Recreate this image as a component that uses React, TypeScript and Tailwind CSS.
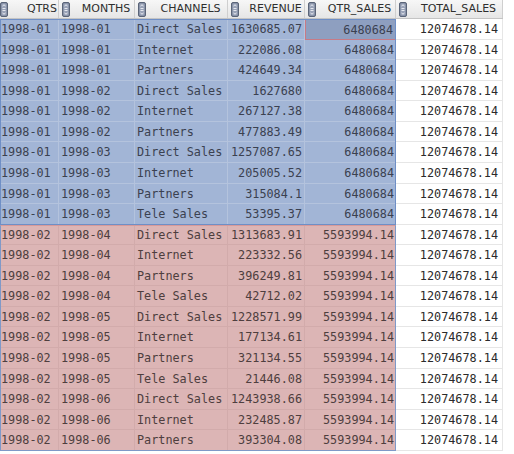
const columns = [
  { name: "QTRS", w: "w-[59px]" },
  { name: "MONTHS", w: "w-[76px]" },
  { name: "CHANNELS", w: "w-[93px]" },
  { name: "REVENUE", w: "w-[77px]" },
  { name: "QTR_SALES", w: "w-[91px]" },
  { name: "TOTAL_SALES", w: "w-[107px]" },
];

type Row = [string, string, string, string];

const rows: Row[] = [
  ["1998-01", "1998-01", "Direct Sales", "1630685.07"],
  ["1998-01", "1998-01", "Internet", "222086.08"],
  ["1998-01", "1998-01", "Partners", "424649.34"],
  ["1998-01", "1998-02", "Direct Sales", "1627680"],
  ["1998-01", "1998-02", "Internet", "267127.38"],
  ["1998-01", "1998-02", "Partners", "477883.49"],
  ["1998-01", "1998-03", "Direct Sales", "1257087.65"],
  ["1998-01", "1998-03", "Internet", "205005.52"],
  ["1998-01", "1998-03", "Partners", "315084.1"],
  ["1998-01", "1998-03", "Tele Sales", "53395.37"],
  ["1998-02", "1998-04", "Direct Sales", "1313683.91"],
  ["1998-02", "1998-04", "Internet", "223332.56"],
  ["1998-02", "1998-04", "Partners", "396249.81"],
  ["1998-02", "1998-04", "Tele Sales", "42712.02"],
  ["1998-02", "1998-05", "Direct Sales", "1228571.99"],
  ["1998-02", "1998-05", "Internet", "177134.61"],
  ["1998-02", "1998-05", "Partners", "321134.55"],
  ["1998-02", "1998-05", "Tele Sales", "21446.08"],
  ["1998-02", "1998-06", "Direct Sales", "1243938.66"],
  ["1998-02", "1998-06", "Internet", "232485.87"],
  ["1998-02", "1998-06", "Partners", "393304.08"],
];

function SortIcon() {
  return (
    <svg width="8" height="15" viewBox="0 0 8 15" className="shrink-0">
      <rect x="0.5" y="0.5" width="7" height="14" rx="1.5" fill="#7c869c" stroke="#5a6478" />
      <rect x="1.5" y="1.5" width="5" height="12" rx="1" fill="#9aa3b8" />
      <path d="M2.5 4 L4 2.8 L5.5 4" stroke="#f2f4f8" strokeWidth="0.9" fill="none" />
      <path d="M2.5 6.5 H5.5 M2.5 8.5 H5.5" stroke="#eef0f5" strokeWidth="0.9" />
      <path d="M2.5 11 L4 12.2 L5.5 11" stroke="#f2f4f8" strokeWidth="0.9" fill="none" />
    </svg>
  );
}

function Header() {
  return (
    <div className="flex h-[19px] border-b border-[#c4c4c4] bg-gradient-to-b from-[#f7f7f7] to-[#e6e6e6]">
      {columns.map((c, i) => (
        <div
          key={c.name}
          className={`${c.w} flex items-center border-r border-[#cfcfcf] ${i === 0 ? "pl-0" : "pl-[3px]"}`}
        >
          <SortIcon />
          <span
            className={`flex-1 text-center text-[11px] text-[#2e2e2e] [font-family:'DejaVu_Sans',sans-serif] ${
              i === 0 ? "pl-[18px]" : "pl-2"
            }`}
          >
            {c.name}
          </span>
        </div>
      ))}
    </div>
  );
}

function DataRow({ row, idx }: { row: Row; idx: number }) {
  const blue = idx < 10;
  const fill = blue ? "bg-[#a2b5d6]" : "bg-[#dcb5b5]";
  const line = blue ? "border-[#b4c3dd]" : "border-[#d2abab]";
  const text = blue ? "text-[#3b4150]" : "text-[#4e3e3e]";
  const qtr = blue ? "6480684" : "5593994.14";
  const sel = idx === 0;
  return (
    <div className="flex h-[20.57px]">
      <div className={`flex w-[305px] ${fill} ${text}`}>
        <div className={`w-[59px] border-r border-b ${line} pl-px leading-[20px]`}>{row[0]}</div>
        <div className={`w-[76px] border-r border-b ${line} pl-[2px] leading-[20px]`}>{row[1]}</div>
        <div className={`w-[93px] border-r border-b ${line} pl-[2px] leading-[20px]`}>{row[2]}</div>
        <div className={`w-[77px] border-r border-b ${line} pr-[2px] text-right leading-[20px]`}>{row[3]}</div>
      </div>
      <div
        className={`w-[91px] pr-[2px] text-right leading-[20px] ${text} ${
          sel ? "border border-[#c77a86] bg-[#8e9fc0]" : `border-b ${line} ${fill}`
        }`}
      >
        {qtr}
      </div>
      <div className="w-[107px] border-b border-r border-[#e6e6e6] bg-white pr-[4px] text-right leading-[20px] text-[#2b2b2b]">
        12074678.14
      </div>
    </div>
  );
}

export default function App() {
  return (
    <div className="h-[454px] w-[514px] overflow-hidden bg-white">
      <div className="w-[503px] text-[11.8px] [font-family:'DejaVu_Sans_Mono',monospace]">
        <Header />
        <div className="relative">
          {rows.map((r, i) => (
            <DataRow key={i} row={r} idx={i} />
          ))}
          <div className="pointer-events-none absolute left-0 top-0 h-[205.7px] w-[396px] border border-[#6f8fc6]" />
          <div className="pointer-events-none absolute left-0 top-[205.7px] h-[226.3px] w-[396px] border border-[#7f99c8] border-t-[#d79a9a]" />
        </div>
      </div>
    </div>
  );
}
